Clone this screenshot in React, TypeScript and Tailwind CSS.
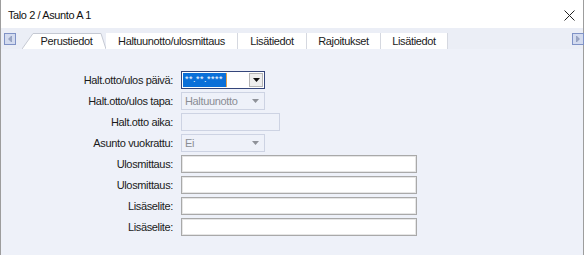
import React from 'react'

const font = { fontFamily: '"Liberation Sans", Arial, sans-serif' }

function ScrollButton({ dir }: { dir: 'left' | 'right' }) {
  return (
    <div className="w-[12px] h-[12px] border border-[#7f92c6] bg-[#d3dbef] flex items-center justify-center">
      <svg width="6" height="8" viewBox="0 0 6 8">
        {dir === 'left' ? (
          <path d="M4.5 1 L1.5 4 L4.5 7 Z" fill="#9aa6c4" stroke="#8390b3" strokeWidth="0.6" />
        ) : (
          <path d="M1.5 1 L4.5 4 L1.5 7 Z" fill="#9aa6c4" stroke="#8390b3" strokeWidth="0.6" />
        )}
      </svg>
    </div>
  )
}

function Arrow({ color }: { color: string }) {
  return (
    <svg width="7" height="4" viewBox="0 0 7 4">
      <path d="M0 0 H7 L3.5 4 Z" fill={color} />
    </svg>
  )
}

const rows = [
  { label: 'Ulosmittaus:' },
  { label: 'Ulosmittaus:' },
  { label: 'Lisäselite:' },
  { label: 'Lisäselite:' },
]

export default function App() {
  return (
    <div className="w-[586px] h-[255px] bg-white overflow-hidden text-[11px] tracking-[-0.35px] text-[#1a1a1a]" style={font}>
      <div className="w-[584px] h-full flex flex-col border-l border-r border-[#9d9d9d]">
        {/* title bar */}
        <div className="h-[28px] flex items-center justify-between pl-[7px] pr-[8px] pt-[2px] bg-white">
          <span className="text-[11px] tracking-[-0.4px] text-[#111]">Talo 2 / Asunto A 1</span>
          <svg width="11" height="11" viewBox="0 0 11 11">
            <path d="M0.5 0.5 L10.5 10.5 M10.5 0.5 L0.5 10.5" stroke="#222" strokeWidth="1" />
          </svg>
        </div>

        {/* tab strip */}
        <div className="h-[21px] bg-[#ebeef6] flex items-end pl-[3px] pr-0 relative">
          <div className="self-start mt-[5px]">
            <ScrollButton dir="left" />
          </div>
          <div className="flex items-end ml-[6px] h-[16px]">
            <div className="relative w-[84px] h-[16px] flex items-center justify-center pl-[5px]">
              <svg className="absolute inset-0" width="84" height="16" viewBox="0 0 84 16">
                <path d="M0 16 L11 0.5 L79 0.5 L84 16 Z" fill="#fff" />
                <path d="M0 16 L11 0.5 L79 0.5 L84 16" fill="none" stroke="#c5c9d3" strokeWidth="1" />
              </svg>
              <span className="relative">Perustiedot</span>
            </div>
            <div className="w-[132px] h-[16px] bg-white border-r border-[#d5d8e0] flex items-center justify-center">
              Haltuunotto/ulosmittaus
            </div>
            <div className="w-[69px] h-[16px] bg-white border-r border-[#d5d8e0] flex items-center justify-center">
              Lisätiedot
            </div>
            <div className="w-[74px] h-[16px] bg-white border-r border-[#d5d8e0] flex items-center justify-center">
              Rajoitukset
            </div>
            <div className="w-[67px] h-[16px] bg-white border-r border-[#d5d8e0] flex items-center justify-center">
              Lisätiedot
            </div>
          </div>
          <div className="ml-auto self-start mt-[5px] -mr-[1px]">
            <ScrollButton dir="right" />
          </div>
        </div>

        {/* body */}
        <div className="flex-1 bg-[#eef1f9] pt-[22px]">
          <div className="grid grid-cols-[172px_auto] gap-x-[8px] gap-y-[3px] items-center">
            <span className="text-right">Halt.otto/ulos päivä:</span>
            <div className="w-[84px] h-[18px] border border-[#34457a] bg-white flex items-center pl-[1px] pr-[1px]">
              <div className="h-[14px] w-[43px] bg-[#0a6fd8] text-white text-[9px] flex items-center pl-[2px] tracking-[0.5px]">
                **.**.****
              </div>
              <div className="w-[1px] h-[14px] bg-[#e3a04e]" />
              <div className="ml-auto w-[14px] h-[14px] bg-[#eeeeee] border border-[#b5b5b5] flex items-center justify-center">
                <Arrow color="#111" />
              </div>
            </div>

            <span className="text-right">Halt.otto/ulos tapa:</span>
            <div className="w-[84px] h-[18px] border border-[#cdd3e3] flex items-center pl-[3px] pr-[5px] text-[#8a8d94]">
              <span>Haltuunotto</span>
              <span className="ml-auto">
                <Arrow color="#8f9299" />
              </span>
            </div>

            <span className="text-right">Halt.otto aika:</span>
            <div className="w-[99px] h-[18px] border border-[#cdd3e3]" />

            <span className="text-right">Asunto vuokrattu:</span>
            <div className="w-[84px] h-[18px] border border-[#cdd3e3] flex items-center pl-[3px] pr-[5px] text-[#8a8d94]">
              <span>Ei</span>
              <span className="ml-auto">
                <Arrow color="#8f9299" />
              </span>
            </div>

            {rows.map((r, i) => (
              <React.Fragment key={i}>
                <span className="text-right">{r.label}</span>
                <div className="w-[236px] h-[18px] border border-[#a9a9a9] bg-white shadow-[inset_0_0_0_1px_#e6e6e6]" />
              </React.Fragment>
            ))}
          </div>
        </div>
      </div>
    </div>
  )
}
